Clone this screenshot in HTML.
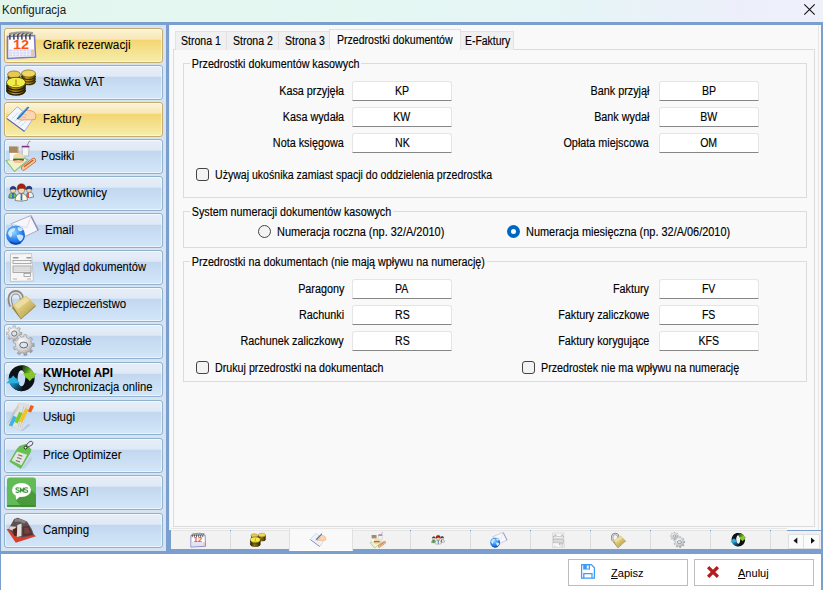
<!DOCTYPE html>
<html><head><meta charset="utf-8">
<style>
*{box-sizing:border-box}
html,body{margin:0;padding:0}
body{width:823px;height:590px;overflow:hidden;position:relative;background:#fff;font-family:"Liberation Sans",sans-serif;font-size:11px;color:#000;-webkit-text-stroke:0.15px #000}
.a{position:absolute}
.bl{position:absolute;background:#7a9ecd}
#title{left:0;top:0;width:823px;height:22px;background:linear-gradient(90deg,#e3f6ee 0%,#e4f7f2 45%,#e6f4f6 70%,#edeffa 92%,#eef0fa 100%)}
#title .t{left:2px;top:3px;font-size:12px;color:#1a1a1a;transform:scaleX(.96);transform-origin:left top;-webkit-text-stroke:0}
#lp{left:1px;top:25px;width:165px;height:526px;background:#d5e3f2}
.nb{position:absolute;left:4px;width:159px;height:35px;border:1px solid #90b2cf;border-radius:3px;
 background:linear-gradient(#e6eef8 0%,#dfe9f5 31%,#c2d7ef 34%,#c9ddf3 60%,#d3e6f9 100%);box-shadow:inset 0 0 0 1px rgba(255,255,255,.55)}
.nb.y{border-color:#c5ad72;background:linear-gradient(#fbf4d8 0%,#f8e6b6 31%,#f4d572 34%,#f4df8a 60%,#f6eeac 100%);box-shadow:inset 0 0 0 1px rgba(255,255,240,.6)}
.nb .l{position:absolute;left:38px;top:9px;font-size:12.5px;color:#000;white-space:nowrap;transform:scaleX(.92);transform-origin:left top;-webkit-text-stroke:0.08px #000}
.nb svg{position:absolute;left:2px;top:2px}
#rp{left:169px;top:25px;width:652px;height:505px;background:#f9f9f9}
.tab{position:absolute;top:31px;height:19px;border:1px solid #e2e2e2;border-bottom:none;background:#f0f0f0;white-space:nowrap;padding:0}
.tab span{position:absolute;top:2px;font-size:12px;transform:scaleX(.88);transform-origin:left top}
#page{left:173px;top:49px;width:642px;height:478px;border:1px solid #dcdcdc;background:#f9f9f9}
.gb{position:absolute;border:1px solid #dcdcdc}
.lg{position:absolute;background:#f9f9f9;padding:0 2px;top:-7px;left:6px;white-space:nowrap;color:#000;font-size:12px;transform:scaleX(.895);transform-origin:left top}
.lbl{position:absolute;white-space:nowrap;text-align:right;color:#000;font-size:12px;transform:scaleX(.9);transform-origin:right top}
.tb{position:absolute;width:100px;height:20px;background:#fff;border:1px solid #e5e5e5;border-bottom:1px solid #868686;border-radius:3px 3px 0 0;text-align:center;line-height:19px;color:#000;font-size:12px}
.tb span{display:inline-block;transform:scaleX(.88)}
.cb{position:absolute;width:13px;height:13px;border:1px solid #444;border-radius:3px;background:#f3f3f3}
.ct{position:absolute;white-space:nowrap;color:#000;font-size:12px;transform:scaleX(.892);transform-origin:left top}
.btab{position:absolute;top:531px;height:18px;border-left:1px solid #dcdcdc}
.btab:before{content:"";position:absolute;left:-1px;top:-1px;width:1px;height:1px;background:#6f9ad6}
.btn{position:absolute;top:559px;height:27px;border:1px solid #bdbdbd;background:#fff}
.btn .t{position:absolute;top:7px;font-size:11.5px;color:#000;transform:scaleX(.96);transform-origin:left top;-webkit-text-stroke:0.05px #000}
</style></head><body>
<svg width="0" height="0" style="position:absolute">
<defs>
<linearGradient id="gold" x1="0" y1="0" x2="0" y2="1"><stop offset="0" stop-color="#f6ea6a"/><stop offset="1" stop-color="#c9a32a"/></linearGradient>
<linearGradient id="goldside" x1="0" y1="0" x2="1" y2="0"><stop offset="0" stop-color="#2a2006"/><stop offset=".35" stop-color="#c8a020"/><stop offset=".7" stop-color="#8a7010"/><stop offset="1" stop-color="#3a3008"/></linearGradient>
<radialGradient id="globe" cx=".4" cy=".35" r=".7"><stop offset="0" stop-color="#9ad4ff"/><stop offset=".5" stop-color="#3a90f0"/><stop offset="1" stop-color="#0a52d4"/></radialGradient>
<linearGradient id="lockb" x1="0" y1="0" x2="1" y2="1"><stop offset="0" stop-color="#e8d890"/><stop offset=".45" stop-color="#dcc878"/><stop offset="1" stop-color="#a89040"/></linearGradient>
<radialGradient id="gear" cx=".4" cy=".35" r=".7"><stop offset="0" stop-color="#ffffff"/><stop offset=".6" stop-color="#cfcfcf"/><stop offset="1" stop-color="#8a8a8a"/></radialGradient>
<linearGradient id="kwg" x1="0" y1="0" x2="1" y2=".6"><stop offset="0" stop-color="#0e1a0c"/><stop offset=".45" stop-color="#4a8a1a"/><stop offset=".7" stop-color="#8ccc2c"/><stop offset="1" stop-color="#6ab01a"/></linearGradient>
<linearGradient id="kwb" x1="0" y1="0" x2="1" y2="1"><stop offset="0" stop-color="#38c4ec"/><stop offset=".45" stop-color="#1a80b0"/><stop offset=".8" stop-color="#0a2a40"/><stop offset="1" stop-color="#0a1420"/></linearGradient>

<symbol id="i1" viewBox="0 0 40 40">
 <path d="M5.5 10.5 L32.5 9.5 L33.5 31 L5.5 32.5 Z" fill="#fdfdff" stroke="#7c7cc0" stroke-width="1.6"/>
 <rect x="7" y="23.5" width="25" height="7" fill="#d6d6f2"/>
 <path d="M7 25.8H32M7 28.2H32M10.5 23.5V30.5M14 23.5V30.5M17.5 23.5V30.5M21 23.5V30.5M24.5 23.5V30.5M28 23.5V30.5" stroke="#f4f4ff" stroke-width=".8"/>
 <rect x="29" y="23.5" width="3" height="6.5" fill="#f0c8a0"/>
 <text x="11" y="22.8" font-family="Liberation Sans" font-weight="bold" font-size="12" fill="#ff520e" textLength="16.2" lengthAdjust="spacingAndGlyphs">12</text>
 <g fill="none" stroke="#4a4a4a" stroke-width="1.6" stroke-linecap="round">
  <path d="M8 13 Q7 7 10 7.5"/><path d="M12 13 Q11 7 14 7.5"/><path d="M16 13 Q15 7 18 7.5"/><path d="M20 13 Q19 7 22 7.5"/><path d="M24 13 Q23 7 26 7.5"/><path d="M28 13 Q27 7 30 7.5"/>
 </g>
 <path d="M7 8 Q18 5 31 7" stroke="#9a9a9a" stroke-width="2" fill="none"/>
</symbol>

<symbol id="i2" viewBox="0 0 40 40">
 <ellipse cx="12" cy="13" rx="6.5" ry="4" fill="url(#goldside)"/>
 <ellipse cx="12" cy="10.5" rx="6.5" ry="3.5" fill="#e8c850" stroke="#6a5010" stroke-width=".6"/>
 <path d="M19.5 9.5 V18 A7 3.5 0 0 0 33.5 18 V9.5 Z" fill="url(#goldside)"/>
 <path d="M19.5 12 A7 3.5 0 0 0 33.5 12 M19.5 14.5 A7 3.5 0 0 0 33.5 14.5 M19.5 17 A7 3.5 0 0 0 33.5 17" stroke="#2a2004" stroke-width="1" fill="none"/>
 <ellipse cx="26.5" cy="9.5" rx="7" ry="3.5" fill="#f0d860" stroke="#6a5010" stroke-width=".6"/>
 <path d="M4.5 18.5 V27 A9.5 5 0 0 0 23.5 27 V18.5 Z" fill="url(#goldside)"/>
 <path d="M4.5 21 A9.5 5 0 0 0 23.5 21 M4.5 23.5 A9.5 5 0 0 0 23.5 23.5 M4.5 26 A9.5 5 0 0 0 23.5 26" stroke="#201804" stroke-width="1.1" fill="none"/>
 <ellipse cx="14" cy="18.5" rx="9.5" ry="5.2" fill="#f2ee48" stroke="#3a3006" stroke-width=".7"/>
 <path d="M13 15.5 H15 V21 H17 V22 H11 V21 H13 Z" fill="#c8b030"/>
</symbol>

<symbol id="i3" viewBox="0 0 40 40">
 <path d="M4.5 18.3 Q4.3 17.6 5 17 L14.8 7.3 Q15.4 6.9 16 7.3 L30.5 19.5 L22.8 30.8 Q22.3 31.3 21.6 30.9 Z" fill="#f2f7fc" stroke="#98a0d0" stroke-width=".8" stroke-linejoin="round"/>
 <path d="M5 18.6 L21.8 31 L22.8 30.8" stroke="#5a60a8" stroke-width="1.1" fill="none"/>
 <path d="M9.5 19 L16.5 12.5 M12.5 21.5 L19.5 15 M15.5 24 L22 18 M18.5 26.5 L24.5 21" stroke="#c0d4e8" stroke-width=".8"/>
 <path d="M16.5 19.5 Q16 15 19.5 12.5 Q22 10.5 25 10.2 L29.5 10.8 Q33.5 12 33.8 15 L33.5 19.2 Q29 20.2 24 19.8 Q19.5 20.5 16.5 19.5 Z" fill="#fcd6b0" stroke="#f09050" stroke-width=".8"/>
 <path d="M18 17.5 Q21 16.5 24 17.5 M19 15 Q22 14 25 15" stroke="#f0a070" stroke-width=".6" fill="none"/>
 <path d="M15.2 17.8 L25.2 7 Q26.6 6.2 27.3 7.5 L17.3 18.6 Z" fill="#1f7ad6"/>
 <path d="M16 17 L25.5 7.2" stroke="#7ab8f0" stroke-width=".6"/>
 <path d="M15.2 17.8 L14.6 19.6 L17.3 18.6 Z" fill="#2a5a9a"/>
</symbol>

<symbol id="i4" viewBox="0 0 40 40">
 <path d="M4 23.7 L18 19 L26 23 L12.5 34.5 Z" fill="#f2f2c8" stroke="#8ac08a" stroke-width="1.2"/>
 <rect x="7.5" y="15.5" width="8.5" height="8" fill="#fafafa" stroke="#c8c8c8" stroke-width=".5"/>
 <rect x="7" y="9.5" width="9.5" height="6.5" fill="#b89a70"/>
 <path d="M8 9.5 V15 M10 9.5V15 M12 9.5V15 M14 9.5V15" stroke="#8a6a40" stroke-width=".7"/>
 <path d="M20 9.5 H27 L26.5 19 H20.5 Z" fill="#f4f4f4" stroke="#a0a0a0" stroke-width=".6"/>
 <rect x="19.8" y="8.8" width="7.5" height="1.6" fill="#803080"/>
 <path d="M25 9 L27 4.5 L28.5 4.2" stroke="#8a8a8a" stroke-width=".9" fill="none"/>
 <ellipse cx="16.5" cy="20" rx="5.5" ry="3.5" fill="#f4d8a8"/>
 <rect x="11" y="21.5" width="11" height="2" rx="1" fill="#2a8a3a"/>
 <rect x="11.5" y="22.3" width="10" height="1.5" fill="#a03020"/>
 <ellipse cx="16.5" cy="24.5" rx="5" ry="1.6" fill="#e8c898"/>
 <path d="M21.5 31 L31.5 23.5" stroke="#d05a30" stroke-width="5" stroke-linecap="round"/>
 <path d="M21.5 31 L31.5 23.5" stroke="#f8c890" stroke-width="3.8" stroke-linecap="round"/>
 <path d="M22.5 29.6 L31 23.3" stroke="#b06030" stroke-width="1.2" stroke-linecap="round"/>
</symbol>

<symbol id="i5" viewBox="0 0 40 40">
 <g stroke="#3a3a3a" stroke-width=".55">
 <path d="M6.8 24 Q6.5 19 10.5 18.5 Q14.5 19 14.8 23 Q11 25 6.8 24 Z" fill="#6cc464"/>
 <path d="M24.2 23 Q24.5 18 28 17.8 Q31.8 18.5 31.6 23 Q28 24.5 24.2 23 Z" fill="#e6f0fa"/>
 </g>
 <rect x="10.2" y="19" width="1.5" height="5.3" fill="#2062c8"/>
 <rect x="25.3" y="18.5" width="1.5" height="5" fill="#e42810"/>
 <circle cx="11" cy="16.3" r="2.6" fill="#f8d6a8" stroke="#3a3a3a" stroke-width=".4"/>
 <path d="M8 15.8 Q8 12.2 11.3 12.3 Q14.2 12.5 14.2 15.5 Q11 14.2 8 15.8 Z" fill="#1c3a98" stroke="#2a2a2a" stroke-width=".4"/>
 <circle cx="27" cy="16" r="2.5" fill="#f8d6a8" stroke="#3a3a3a" stroke-width=".4"/>
 <path d="M24 15.5 Q24 12 27.2 12.1 Q30.1 12.3 30.1 15.3 Q27 14 24 15.5 Z" fill="#1c3a98" stroke="#2a2a2a" stroke-width=".4"/>
 <path d="M13.2 26.5 Q13 20 19.3 19.2 Q25.6 20 25.4 26.2 Q19.5 28 13.2 26.5 Z" fill="#fbf8de" stroke="#3a3a3a" stroke-width=".55"/>
 <rect x="18.6" y="19.5" width="1.7" height="7" fill="#2a6ad4"/>
 <circle cx="19.4" cy="16.2" r="3.3" fill="#fad4a8" stroke="#3a3a3a" stroke-width=".45"/>
 <path d="M15.2 16 Q14.8 9.6 19.6 9.8 Q24 10 23.8 15.5 Q21 13.6 18 14.6 Q16.5 15 15.2 16 Z" fill="#b81a08" stroke="#3a2a2a" stroke-width=".45"/>
</symbol>

<symbol id="i6" viewBox="0 0 40 40">
 <path d="M8.8 12.9 L29.2 4.4 L36.6 19 L22.4 25.8 Z" fill="#f6f6fb" stroke="#9a9ac0" stroke-width=".8"/>
 <path d="M29.2 4.4 L36.6 19 L35.6 19.8 L28.5 5.5 Z" fill="#8a88b0"/>
 <path d="M8.8 12.9 L25 16.5 L29.2 4.4" stroke="#d0d0e4" stroke-width=".7" fill="none"/>
 <circle cx="13.6" cy="24" r="9.4" fill="url(#globe)"/>
 <path d="M7.5 19 Q10 16.5 13.5 17.5 Q12.5 20.5 10 21.5 Q11 24 9 26.5 Q6.5 25 5.8 22 Z M15.5 16.5 Q19 15.8 21 18.5 Q19.5 21 16.8 20 Q15.5 18.5 15.5 16.5 Z M14.5 24.5 Q18 22.5 21.5 25 Q21 29 18 30.5 Q15.5 28 14.5 24.5 Z" fill="#d8f2ff" opacity=".9"/>
 <path d="M8 31 Q13.5 34.5 19 31.5" stroke="#0846b8" stroke-width="1.6" fill="none"/>
</symbol>

<symbol id="i7" viewBox="0 0 40 40">
 <path d="M8.5 6 L29.5 5.5 L31.5 33 L8.5 33.5 Z" fill="#f6f6f6" stroke="#bcbcbc" stroke-width=".8"/>
 <rect x="11" y="9" width="5.5" height="1.5" fill="#9a9a9a"/><rect x="24.5" y="9" width="4.5" height="1.5" fill="#9a9a9a"/>
 <rect x="11" y="12.5" width="18" height="3" fill="none" stroke="#9a9a9a" stroke-width=".8"/>
 <rect x="11" y="18" width="18" height="6.5" fill="#e4e4e4" stroke="#9a9a9a" stroke-width=".8"/>
 <path d="M11 20.2H29M11 22.3H29" stroke="#c0c0c0" stroke-width=".5"/>
 <rect x="22" y="25.5" width="6.5" height="3" fill="none" stroke="#9a9a9a" stroke-width=".8"/>
 <path d="M11 31H15M25 31H29" stroke="#9a9a9a" stroke-width=".7"/>
</symbol>

<symbol id="i8" viewBox="0 0 40 40">
 <path d="M9.5 21 Q7.6 17 7.8 13.3 A6 6 0 0 1 19.8 13.3 L19.8 16" fill="none" stroke="#8a8a8a" stroke-width="4.4"/>
 <path d="M9.5 20.5 Q8 17 8.2 13.3 A5.6 5.6 0 0 1 19.4 13.3" fill="none" stroke="#e4e4e4" stroke-width="1.6"/>
 <path d="M10.6 20 L24 10.5 L33.7 20.3 L19 33.5 Z" fill="url(#lockb)"/>
 <path d="M10.6 20 L19 33.5 L18.8 34.6 L10.3 23.2 Z" fill="#9a8638"/>
 <path d="M19 33.5 L33.7 20.3 L33.6 21.6 L18.8 34.6 Z" fill="#8a7630"/>
 <path d="M12.5 20 L23.8 12 L27.5 15.5 L16 24 Z" fill="#f6ecc0" opacity=".55"/>
</symbol>

<symbol id="i9" viewBox="0 0 40 40">
 <path d="M19.88 10.13 L19.88 12.87 L18.13 12.42 L17.04 15.05 L18.60 15.96 L16.66 17.90 L15.75 16.34 L13.12 17.43 L13.57 19.18 L10.83 19.18 L11.28 17.43 L8.65 16.34 L7.74 17.90 L5.80 15.96 L7.36 15.05 L6.27 12.42 L4.52 12.87 L4.52 10.13 L6.27 10.58 L7.36 7.95 L5.80 7.04 L7.74 5.10 L8.65 6.66 L11.28 5.57 L10.83 3.82 L13.57 3.82 L13.12 5.57 L15.75 6.66 L16.66 5.10 L18.60 7.04 L17.04 7.95 L18.13 10.58Z" fill="url(#gear)" stroke="#9a9a9a" stroke-width=".5"/>
 <circle cx="12.2" cy="11.5" r="2.6" fill="#d8e6f4" stroke="#6a6a6a" stroke-width=".9"/>
 <path d="M32.17 21.34 L32.17 24.66 L29.92 24.13 L28.72 27.42 L30.79 28.46 L28.65 31.00 L27.28 29.15 L24.24 30.90 L25.15 33.02 L21.88 33.60 L22.02 31.29 L18.56 30.68 L17.90 32.90 L15.03 31.24 L16.61 29.56 L14.36 26.87 L12.43 28.14 L11.29 25.02 L13.59 24.75 L13.59 21.25 L11.29 20.98 L12.43 17.86 L14.36 19.13 L16.61 16.44 L15.03 14.76 L17.90 13.10 L18.56 15.32 L22.02 14.71 L21.88 12.40 L25.15 12.98 L24.24 15.10 L27.28 16.85 L28.65 15.00 L30.79 17.54 L28.72 18.58 L29.92 21.87Z" fill="url(#gear)" stroke="#8a8a8a" stroke-width=".5"/>
 <ellipse cx="21.7" cy="23" rx="4" ry="2.9" fill="#d8e6f4" stroke="#6a6a6a" stroke-width="1"/>
</symbol>

<symbol id="i10" viewBox="0 0 40 40">
 <defs><clipPath id="kwc"><path d="M19.7 5.3 A13 13 0 1 1 19.69 5.3 Z M19.4 10.2 A3.8 8.1 0 1 0 19.41 10.2 Z" clip-rule="evenodd"/></clipPath></defs>
 <g clip-path="url(#kwc)">
  <rect x="5" y="4" width="30" height="30" fill="#0b1316"/>
  <path d="M19.7 3 L36 3 L36 18.3 L22 18.3 Z" fill="url(#kwg)"/>
  <path d="M3 18.3 L19.7 18.3 L19.7 34 L3 34 Z" fill="url(#kwb)"/>
 </g>
 <path d="M20.8 13.2 L34.8 13.2 L27.8 21.2 Z" fill="#86c82a"/>
 <path d="M4.2 23.3 L18.2 23.3 L11.3 15.6 Z" fill="#2cb0dc"/>
</symbol>

<symbol id="i11" viewBox="0 0 40 40">
 <path d="M5.1 26.1 L16.6 5.4 L27.1 6.4 L19.3 32.5 Z" fill="#e2e2e2" stroke="#c8c8c8" stroke-width=".5"/>
 <path d="M10 17 L13.5 11 M8 22 L12 15 M22 8 L16 29 M24.5 8.5 L18 30 M7 24 L17 9 M6 25.5 L16.5 7" stroke="#b8b8b8" stroke-width=".6"/>
 <path d="M6.8 27.3 L11.3 17.8 L14.6 19.2 L10.2 28.5 Z" fill="#3ab4e2"/>
 <path d="M12.3 24 L17.3 13.8 L20.6 15.2 L15.6 25.4 Z" fill="#7ac82e"/>
 <path d="M17 23.5 L23.2 10.2 L26.6 11.6 L20.4 24.8 Z" fill="#f0c424"/>
 <path d="M25.8 13.6 L28.6 7 L32 8.3 L29 14.6 Z" fill="#f25c1a"/>
 <path d="M19.3 32.5 L26 26 L28.5 27 L21 33 Z" fill="#9aa8b8" opacity=".45"/>
</symbol>

<symbol id="i12" viewBox="0 0 40 40">
 <path d="M19.5 32 L29 20 L30 24 L22 33 Z" fill="#a8b8c8" opacity=".35"/>
 <path d="M7.8 25.6 L15.3 12.7 L17.5 10.3 L23.9 8.3 L29.1 13.5 L27.9 17 L18.7 32.5 Z" fill="#62c44a" stroke="#4aa834" stroke-width=".5" stroke-linejoin="round"/>
 <path d="M9.6 24.6 L15.1 15.4 L25.1 18.8 L19.4 29.2 Z" fill="#e6e4e2"/>
 <path d="M16.2 18.8 L20.5 20.3 M15.2 21.6 L19.5 23.1 M13.8 24.4 L18.1 25.9" stroke="#707070" stroke-width="1.1"/>
 <circle cx="23.6" cy="11.6" r="1.4" fill="#fff" stroke="#2a2a2a" stroke-width="1"/>
 <path d="M23.8 10.5 Q26.5 4.8 29.7 5.3 Q32 6.3 30.2 8.8 Q28 10.5 24.8 11.3" fill="none" stroke="#3a3a3a" stroke-width=".9"/>
</symbol>

<symbol id="i13" viewBox="0 0 40 40">
 <rect x="5" y="4.5" width="29" height="29.3" rx="3" fill="#63bb58"/>
 <path d="M27 15 L34 21.5 V30.8 A3 3 0 0 1 31 33.8 H19.5 L13.5 26.5 Z" fill="#4a9a3c"/>
 <rect x="5" y="32" width="29" height="1.8" fill="#3e8a34"/>
 <ellipse cx="19.5" cy="17" rx="9.5" ry="7" fill="#fff"/>
 <path d="M13.5 21 L14.2 27 L19 22.5 Z" fill="#fff"/>
 <g fill="none" stroke="#3a9236" stroke-width="1.15"><path d="M17.2 15.3 Q16.5 14.7 15.5 14.7 Q13.9 14.7 13.9 15.9 Q13.9 16.8 15.5 17 Q17.2 17.2 17.2 18.2 Q17.2 19.3 15.5 19.3 Q14.3 19.3 13.7 18.6"/><path d="M18.4 19.4 V14.7 L20.05 18.2 L21.7 14.7 V19.4"/><path d="M25.7 15.3 Q25 14.7 24 14.7 Q22.4 14.7 22.4 15.9 Q22.4 16.8 24 17 Q25.7 17.2 25.7 18.2 Q25.7 19.3 24 19.3 Q22.8 19.3 22.2 18.6"/></g>
</symbol>

<symbol id="i14" viewBox="0 0 40 40">
 <path d="M4.6 18.3 L13.8 31.8 L34 25.2 L22 15 Z" fill="#d8402e"/>
 <path d="M6.6 18 L7.8 15.7 L12.1 7.9 L15.8 6.7 L25 10.5 L29.7 18 L32 24.3 L21 26.6 L13 24.9 Z" fill="#5a5252"/>
 <path d="M12.5 8.5 Q18 6 24.5 11 L22 12.5 Q17 9.5 13 11 Z" fill="#8a8282"/>
 <path d="M6.8 18 L8.2 15.2 L14 15.8 L12.8 20.5 Z" fill="#ead2c6"/>
 <path d="M10.6 18.5 L15.3 16.3 L15 25.3 L12 24.6 Z" fill="#4a2424"/>
 <path d="M15.3 14 L19.6 12.6 L19.4 25 L14.8 26 Z" fill="#e2dede"/>
 <path d="M20.4 15.7 L26.8 14.8 L30.8 23.8 L20.6 25.6 Z" fill="#5e2e2e"/>
 <path d="M22 17 L26 16.5 L28.5 22 L22.5 23" fill="#6e4444"/>
</symbol>
</defs></svg>

<div id="title" class="a"><div class="a t">Konfiguracja</div>
<svg class="a" style="left:803px;top:3px" width="13" height="13" viewBox="0 0 13 13"><path d="M1.3 1.3L11.7 11.7M11.7 1.3L1.3 11.7" stroke="#111" stroke-width="1.1" fill="none"/></svg>
</div>
<!-- frame -->
<div class="bl" style="left:0;top:22px;width:823px;height:3px"></div>
<div class="bl" style="left:0;top:22px;width:1px;height:568px"></div>
<div class="bl" style="left:821px;top:22px;width:2px;height:568px"></div>
<div class="bl" style="left:166px;top:22px;width:3px;height:532px"></div>
<div class="bl" style="left:0;top:551px;width:170px;height:3px"></div>
<div class="bl" style="left:166px;top:549px;width:657px;height:5px"></div>
<div class="bl" style="left:166px;top:529px;width:5px;height:22px"></div>

<div id="lp" class="a"></div>
<div id="rp" class="a"></div>
<div class="a" style="left:818px;top:25px;width:1px;height:505px;background:#e6e6e6"></div>
<div class="a" style="left:169px;top:25px;width:1px;height:504px;background:#eeede7"></div>

<!-- left nav -->
<div class="nb y" style="top:28px"><span class="l" style="left:37.5px;transform:scaleX(.94)">Grafik rezerwacji</span></div>
<div class="nb" style="top:65px"><span class="l">Stawka VAT</span></div>
<div class="nb y" style="top:102px"><span class="l">Faktury</span></div>
<div class="nb" style="top:139px"><span class="l" style="left:35.5px">Posiłki</span></div>
<div class="nb" style="top:176px"><span class="l">Użytkownicy</span></div>
<div class="nb" style="top:213px"><span class="l" style="left:39.5px">Email</span></div>
<div class="nb" style="top:250px"><span class="l" style="transform:scaleX(.889)">Wygląd dokumentów</span></div>
<div class="nb" style="top:287px"><span class="l">Bezpieczeństwo</span></div>
<div class="nb" style="top:324px"><span class="l" style="left:35.5px">Pozostałe</span></div>
<div class="nb" style="top:362px"><span class="l" style="top:3px;font-weight:bold">KWHotel API</span><span class="l" style="top:17px;transform:scaleX(.9)">Synchronizacja online</span></div>
<div class="nb" style="top:400px"><span class="l">Usługi</span></div>
<div class="nb" style="top:438px"><span class="l">Price Optimizer</span></div>
<div class="nb" style="top:475px"><span class="l">SMS API</span></div>
<div class="nb" style="top:513px"><span class="l">Camping</span></div>

<!-- icons -->
<svg class="a" style="left:2px;top:26px" width="40" height="40"><use href="#i1"/></svg>
<svg class="a" style="left:2px;top:64px" width="40" height="40"><use href="#i2"/></svg>
<svg class="a" style="left:2px;top:100px" width="40" height="40"><use href="#i3"/></svg>
<svg class="a" style="left:2px;top:137px" width="40" height="40"><use href="#i4"/></svg>
<svg class="a" style="left:2px;top:174px" width="40" height="40"><use href="#i5"/></svg>
<svg class="a" style="left:2px;top:211px" width="40" height="40"><use href="#i6"/></svg>
<svg class="a" style="left:2px;top:248px" width="40" height="40"><use href="#i7"/></svg>
<svg class="a" style="left:2px;top:285px" width="40" height="40"><use href="#i8"/></svg>
<svg class="a" style="left:2px;top:322px" width="40" height="40"><use href="#i9"/></svg>
<svg class="a" style="left:2px;top:360px" width="40" height="40"><use href="#i10"/></svg>
<svg class="a" style="left:2px;top:398px" width="40" height="40"><use href="#i11"/></svg>
<svg class="a" style="left:2px;top:436px" width="40" height="40"><use href="#i12"/></svg>
<svg class="a" style="left:2px;top:473px" width="40" height="40"><use href="#i13"/></svg>
<svg class="a" style="left:2px;top:511px" width="40" height="40"><use href="#i14"/></svg>
<!-- tabs -->
<div id="page" class="a"></div>
<div class="tab" style="left:175px;width:52px"><span style="left:5px">Strona 1</span></div>
<div class="tab" style="left:226px;width:53px"><span style="left:6px">Strona 2</span></div>
<div class="tab" style="left:278px;width:52px"><span style="left:6px">Strona 3</span></div>
<div class="tab" style="left:329px;top:29px;height:21px;width:132px;background:#f9f9f9;border-color:#e0e0e0"><span style="left:7px;top:3px">Przedrostki dokumentów</span></div>
<div class="tab" style="left:460px;width:54px"><span style="left:3.7px;transform:scaleX(.87)">E-Faktury</span></div>

<!-- group 1 -->
<div class="gb" style="left:183px;top:63px;width:624px;height:135px"><span class="lg">Przedrostki dokumentów kasowych</span></div>
<div class="gb" style="left:183px;top:211px;width:624px;height:37px"><span class="lg">System numeracji dokumentów kasowych</span></div>
<div class="gb" style="left:183px;top:261px;width:624px;height:121px"><span class="lg">Przedrostki na dokumentach (nie mają wpływu na numerację)</span></div>


<!-- form group1 -->
<div class="lbl" style="right:479px;top:84px">Kasa przyjęła</div>
<div class="lbl" style="right:479px;top:110px">Kasa wydała</div>
<div class="lbl" style="right:479px;top:136px">Nota księgowa</div>
<div class="tb" style="left:352px;top:81px"><span>KP</span></div>
<div class="tb" style="left:352px;top:107px"><span>KW</span></div>
<div class="tb" style="left:352px;top:133px"><span>NK</span></div>
<div class="lbl" style="right:174px;top:84px">Bank przyjął</div>
<div class="lbl" style="right:174px;top:110px">Bank wydał</div>
<div class="lbl" style="right:174px;top:136px">Opłata miejscowa</div>
<div class="tb" style="left:659px;top:81px"><span>BP</span></div>
<div class="tb" style="left:659px;top:107px"><span>BW</span></div>
<div class="tb" style="left:659px;top:133px"><span>OM</span></div>
<div class="cb" style="left:196px;top:168px"></div>
<div class="ct" style="left:215px;top:168px;transform:scaleX(.88)">Używaj ukośnika zamiast spacji do oddzielenia przedrostka</div>
<!-- group2 -->
<div class="a" style="left:258px;top:225px;width:13px;height:13px;border:1px solid #444;border-radius:50%;background:#f3f3f3"></div>
<div class="ct" style="left:276.5px;top:225px;transform:scaleX(.912)">Numeracja roczna (np. 32/A/2010)</div>
<div class="a" style="left:507px;top:225px;width:13px;height:13px;border-radius:50%;background:#fff;border:4px solid #0067c0"></div>
<div class="ct" style="left:525.5px;top:225px;transform:scaleX(.911)">Numeracja miesięczna (np. 32/A/06/2010)</div>
<!-- group3 -->
<div class="lbl" style="right:479px;top:282px">Paragony</div>
<div class="lbl" style="right:479px;top:308px">Rachunki</div>
<div class="lbl" style="right:479px;top:334px">Rachunek zaliczkowy</div>
<div class="tb" style="left:352px;top:279px"><span>PA</span></div>
<div class="tb" style="left:352px;top:305px"><span>RS</span></div>
<div class="tb" style="left:352px;top:331px"><span>RS</span></div>
<div class="lbl" style="right:174px;top:282px">Faktury</div>
<div class="lbl" style="right:174px;top:308px">Faktury zaliczkowe</div>
<div class="lbl" style="right:174px;top:334px">Faktury korygujące</div>
<div class="tb" style="left:659px;top:279px"><span>FV</span></div>
<div class="tb" style="left:659px;top:305px"><span>FS</span></div>
<div class="tb" style="left:659px;top:331px"><span>KFS</span></div>
<div class="cb" style="left:196px;top:361px"></div>
<div class="ct" style="left:215px;top:361px">Drukuj przedrostki na dokumentach</div>
<div class="cb" style="left:522px;top:361px"></div>
<div class="ct" style="left:541px;top:361px">Przedrostek nie ma wpływu na numerację</div>

<!-- bottom tabs -->
<div class="a" style="left:171px;top:528px;width:616px;height:1px;background:#e6e6e6"></div>
<div class="a" style="left:171px;top:530px;width:616px;height:1px;background:#e4e4e4"></div>
<div class="a" style="left:171px;top:531px;width:616px;height:18px;background:#f2f2f2"></div>
<div class="a" style="left:787px;top:530px;width:34px;height:1px;background:#7a9ecd"></div>
<div class="a" style="left:787px;top:531px;width:34px;height:18px;background:#f0f0f0"></div>
<div class="btab" style="left:230px"></div>
<div class="a" style="left:289px;top:529px;width:64px;height:22px;background:#f9f9f9;border-left:1px solid #e0e0e0;border-right:1px solid #e0e0e0;border-bottom:1px solid #fff"></div>
<div class="btab" style="left:410px"></div>
<div class="btab" style="left:470px"></div>
<div class="btab" style="left:530px"></div>
<div class="btab" style="left:590px"></div>
<div class="btab" style="left:650px"></div>
<div class="btab" style="left:710px"></div>
<div class="btab" style="left:770px"></div>
<div class="a" style="left:788px;top:534px;width:16px;height:15px;border:1px solid #e0e0e0;background:#fafafa"></div>
<div class="a" style="left:803px;top:534px;width:17px;height:15px;border:1px solid #e0e0e0;background:#fafafa"></div>
<svg class="a" style="left:788px;top:534px" width="32" height="15"><path d="M5.5 6.7L9.3 3.6V9.8Z" fill="#111"/><path d="M26.8 6.7L23 3.6V9.8Z" fill="#111"/></svg>
<svg class="a" style="left:188px;top:530px" width="21" height="21"><use href="#i1"/></svg>
<svg class="a" style="left:248px;top:530px" width="21" height="21"><use href="#i2"/></svg>
<svg class="a" style="left:308px;top:530px" width="21" height="21"><use href="#i3"/></svg>
<svg class="a" style="left:368px;top:530px" width="21" height="21"><use href="#i4"/></svg>
<svg class="a" style="left:428px;top:530px" width="21" height="21"><use href="#i5"/></svg>
<svg class="a" style="left:488px;top:530px" width="21" height="21"><use href="#i6"/></svg>
<svg class="a" style="left:548px;top:530px" width="21" height="21"><use href="#i7"/></svg>
<svg class="a" style="left:608px;top:530px" width="21" height="21"><use href="#i8"/></svg>
<svg class="a" style="left:668px;top:530px" width="21" height="21"><use href="#i9"/></svg>
<svg class="a" style="left:728px;top:530px" width="21" height="21"><use href="#i10"/></svg>
<!-- buttons -->
<div class="btn" style="left:568px;width:120px"><span class="t" style="left:42px"><u>Z</u>apisz</span></div>
<div class="btn" style="left:694px;width:120px"><span class="t" style="left:43px"><u>A</u>nuluj</span></div>
<svg class="a" style="left:580px;top:563px" width="16" height="17"><path d="M1.6 1.6 H11.3 L14.4 4.7 V15.2 H1.6 Z" fill="none" stroke="#3d9cf4" stroke-width="1.25" stroke-linejoin="round"/><path d="M3.2 1.6 H10 V6.6 H3.2 Z" fill="#3d9cf4"/><rect x="6.8" y="2.5" width="1.9" height="3.1" fill="#fff"/><path d="M3.8 15.2 V10.6 H12 V15.2" fill="none" stroke="#3d9cf4" stroke-width="1.25"/></svg>
<svg class="a" style="left:706px;top:565px" width="14" height="14"><path d="M3.3 3.3 L10.7 10.7 M10.7 3.3 L3.3 10.7" stroke="#b51d1d" stroke-width="3.3" stroke-linecap="square"/></svg>
</body></html>
